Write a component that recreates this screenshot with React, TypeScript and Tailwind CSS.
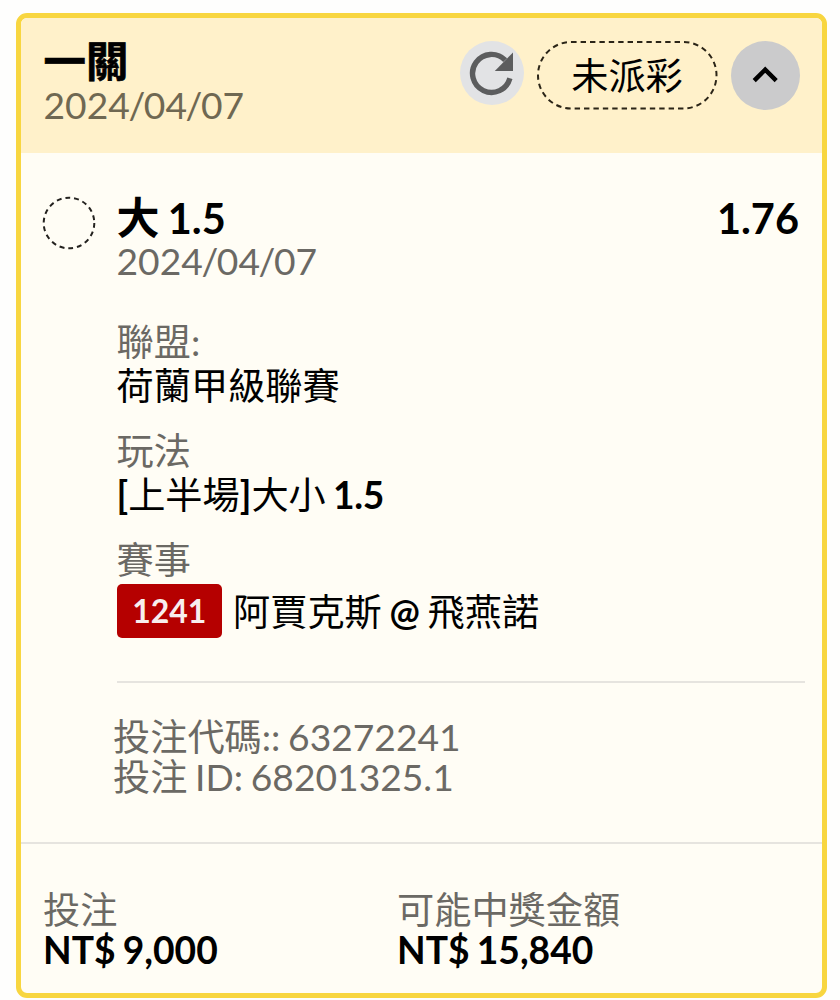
import React from 'react';

const details = [
  { label: '聯盟:', value: <span className="font-normal">荷蘭甲級聯賽</span> },
  {
    label: '玩法',
    value: (
      <>
        [<span className="font-normal">上半場</span>]<span className="font-normal">大小</span>{' '}
        <span className="tracking-[-0.3px]">1.5</span>
      </>
    ),
  },
];

const totals = [
  { label: '投注', value: 'NT$ 9,000' },
  { label: '可能中獎金額', value: 'NT$ 15,840' },
];

function DateText() {
  return (
    <>
      2024<span className="-mx-[1.4px]">/</span>04<span className="-mx-[1.4px]">/</span>07
    </>
  );
}

function RefreshButton() {
  return (
    <button className="w-16 h-16 rounded-full bg-[#e2e3e5]">
      <svg viewBox="0 0 64 64" className="w-16 h-16">
        <path d="M49.9 37.3 A19 19 0 1 1 45.2 19.2" fill="none" stroke="#5c5d5e" strokeWidth="5.4" />
        <path d="M53 11.5 V30 H34.8 Z" fill="#5c5d5e" />
      </svg>
    </button>
  );
}

function StatusPill() {
  return (
    <div className="relative ml-[13px] w-[181px] h-[69px] flex items-center justify-center text-[37.2px] leading-[44px] text-black">
      <svg viewBox="0 0 181 69" className="absolute inset-0 w-full h-full">
        <rect x="1" y="1" width="178.5" height="66.5" rx="33.2" fill="none" stroke="#2b2517" strokeWidth="2" strokeDasharray="5.4 4" />
      </svg>
      <span className="-ml-px">未派彩</span>
    </div>
  );
}

export default function App() {
  return (
    <div className="h-[1000px] bg-[#fefefd] pl-4 pt-[13px] font-['Lato','Noto_Sans_CJK_TC',sans-serif] text-[37.2px] text-[#6b6964] whitespace-nowrap [word-spacing:-1.8px]">
      <div className="w-[811px] h-[985px] border-[5px] border-[#f8d640] rounded-[11px] bg-[#fffdf5] overflow-hidden">
        {/* Header */}
        <header className="h-[135px] bg-[#fff1ca] pl-[22.5px] pr-[22px] pt-5 flex justify-between items-start">
          <div>
            <h1 className="text-[42.4px] leading-[46px] font-bold text-black [-webkit-text-stroke:0.7px_#000]">一關</h1>
            <p className="mt-px leading-10 text-[#6f6852]">
              <DateText />
            </p>
          </div>
          <div className="flex pt-[3px]">
            <RefreshButton />
            <StatusPill />
            <button className="ml-[13px] w-[69px] h-[69px] rounded-full bg-[#cbcbcc]">
              <svg viewBox="0 0 69 69" className="w-[69px] h-[69px]">
                <path d="M23.2 39.6 L34.2 28.6 L45.2 39.6" fill="none" stroke="#000" strokeWidth="4.4" />
              </svg>
            </button>
          </div>
        </header>

        {/* Selection */}
        <section className="h-[689px] pl-[21px] pr-[17px] pt-[42px] flex">
          <svg viewBox="0 0 54 54" className="w-[54px] h-[54px] mt-px shrink-0">
            <circle cx="27" cy="27" r="25.3" fill="none" stroke="#24221f" strokeWidth="2" strokeDasharray="4.9 3.93" />
          </svg>
          <div className="ml-[20.5px] flex-1">
            <div className="pr-[6px] flex justify-between text-[41.5px] leading-[46px] font-bold text-black">
              <span>
                <span className="text-[43px]">大</span> 1.5
              </span>
              <span>1.76</span>
            </div>
            <p className="leading-10">
              <DateText />
            </p>

            <div className="mt-[39px] flex flex-col gap-[21px] leading-[44px]">
              {details.map((d) => (
                <div key={d.label}>
                  <p>{d.label}</p>
                  <p className="font-bold text-black">{d.value}</p>
                </div>
              ))}
              <div>
                <p>賽事</p>
                <div className="mt-[2px] h-[54px] flex items-center text-black">
                  <span className="w-[105.5px] h-[54px] rounded-[5px] bg-[#b50000] text-center text-[32px] leading-[53px] font-bold text-[#f8eeee]">
                    1241
                  </span>
                  <span className="ml-[11px] pt-px">
                    阿賈克斯 <span className="font-bold text-[36px]">@</span> 飛燕諾
                  </span>
                </div>
              </div>
            </div>

            <hr className="mt-[43px] border-t-2 border-[#e6e4df]" />
            <div className="-ml-[3.5px] mt-[34px] leading-10">
              <p>投注代碼:: 63272241</p>
              <p>投注 ID: 68201325.1</p>
            </div>
          </div>
        </section>

        {/* Totals */}
        <footer className="h-[151px] border-t-2 border-[#e6e4df] pl-[22px] pt-[46px] grid grid-cols-[354px_1fr]">
          {totals.map((t) => (
            <div key={t.label} className="leading-10">
              <p>{t.label}</p>
              <p className="font-bold text-black">{t.value}</p>
            </div>
          ))}
        </footer>
      </div>
    </div>
  );
}
